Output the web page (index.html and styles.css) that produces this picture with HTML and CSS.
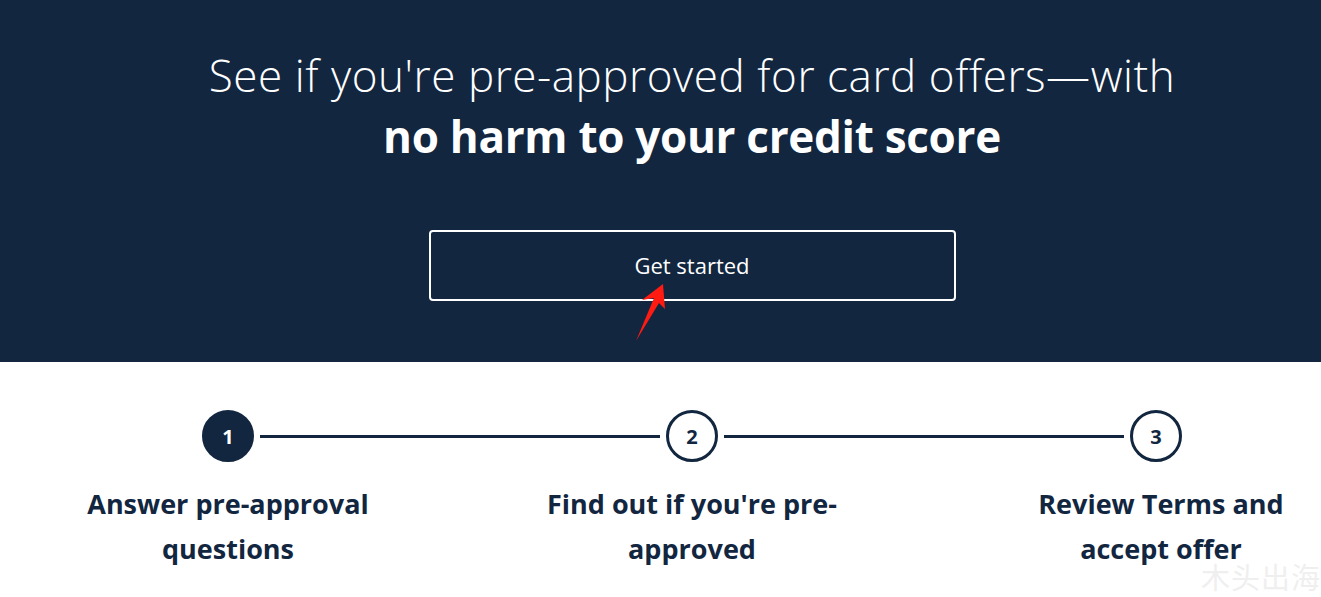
FILE: index.html
```html
<!DOCTYPE html>
<html lang="en">
<head>
  <meta charset="UTF-8">
  <title>Pre-approval</title>
  <link rel="stylesheet" href="styles.css">
</head>
<body>
  <div class="page">
    <section class="hero">
      <h1 class="hero-title">
        <span class="light">See if you're pre-approved for card offers—with</span>
        <strong>no harm to your credit score</strong>
      </h1>
      <button class="btn-start">Get started</button>
    </section>

    <section class="steps">
      <div class="step">
        <div class="track">
          <span class="line hidden"></span>
          <span class="dot filled">1</span>
          <span class="line"></span>
        </div>
        <p class="label">Answer pre-approval questions</p>
      </div>
      <div class="step">
        <div class="track">
          <span class="line"></span>
          <span class="dot">2</span>
          <span class="line"></span>
        </div>
        <p class="label">Find out if you're pre-approved</p>
      </div>
      <div class="step">
        <div class="track">
          <span class="line"></span>
          <span class="dot">3</span>
          <span class="line hidden"></span>
        </div>
        <p class="label">Review Terms and accept offer</p>
      </div>
    </section>
  </div>

  <!-- annotation arrow -->
  <svg class="arrow" width="40" height="70" viewBox="630 280 40 70">
    <polygon points="663,284 642,300 654,298 636,341 659,303 665,309" fill="#ff1a12"/>
  </svg>
  <div class="watermark">木头出海</div>
</body>
</html>
```

FILE: styles.css
```css
html, body {
  margin: 0;
  height: 100%;
  overflow: hidden;
}
body {
  font-family: "Open Sans", "Noto Sans", sans-serif;
  background: #fff;
  color: #12263f;
  position: relative;
}
.page {
  width: 1384px;
}
.hero {
  background: #12263f;
  height: 362px;
  box-sizing: border-box;
  padding-top: 45px;
  display: flex;
  flex-direction: column;
  align-items: center;
}
.hero-title {
  margin: 0;
  text-align: center;
  color: #fff;
  font-size: 44px;
  line-height: 61px;
  font-weight: 300;
}
.hero-title .light,
.hero-title strong {
  display: block;
}
.hero-title .light {
  letter-spacing: 0.55px;
}
.hero-title strong {
  font-weight: 700;
  letter-spacing: -0.3px;
}
.btn-start {
  margin-top: 63px;
  width: 527px;
  height: 71px;
  background: transparent;
  border: 2px solid #fff;
  border-radius: 4px;
  color: #fff;
  font-family: inherit;
  font-size: 22px;
  font-weight: 500;
  padding-bottom: 3px;
}
.steps {
  display: grid;
  grid-template-columns: repeat(3, 464px);
  justify-content: center;
  padding-top: 48px;
}
.step {
  display: flex;
  flex-direction: column;
  align-items: center;
}
.track {
  width: 100%;
  display: flex;
  align-items: center;
}
.line {
  flex: 1;
  height: 3px;
  background: #12263f;
}
.line:first-child {
  margin-right: 6px;
}
.line:last-child {
  margin-left: 6px;
}
.line.hidden {
  visibility: hidden;
}
.dot {
  width: 52px;
  height: 52px;
  box-sizing: border-box;
  border: 3px solid #12263f;
  border-radius: 50%;
  display: flex;
  align-items: center;
  justify-content: center;
  font-size: 20px;
  font-weight: 700;
  color: #12263f;
}
.dot.filled {
  background: #12263f;
  color: #fff;
}
.label {
  margin: 19px 0 0;
  max-width: 320px;
  text-align: center;
  font-size: 27px;
  line-height: 45px;
  font-weight: 700;
}
.step:last-child .label {
  margin-left: 10px;
}
.arrow {
  position: absolute;
  left: 630px;
  top: 280px;
}
.watermark {
  position: absolute;
  right: 0;
  bottom: 0;
  font-family: "Noto Sans CJK SC", sans-serif;
  font-size: 29px;
  color: #efefef;
  letter-spacing: 1px;
}
```
